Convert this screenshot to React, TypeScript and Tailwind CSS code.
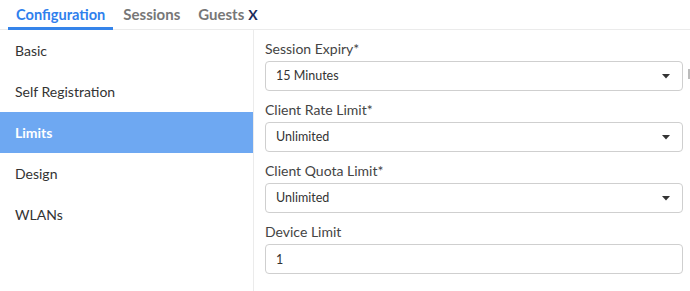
import { useState } from 'react';

const sections = ['Basic', 'Self Registration', 'Limits', 'Design', 'WLANs'];

function Caret() {
  return (
    <svg width="8" height="5" viewBox="0 0 8 5" className="text-[#333]" fill="currentColor">
      <path d="M0 0h8L4 4.5z" />
    </svg>
  );
}

function SelectBox({ value }: { value: string }) {
  return (
    <div className="h-[30px] w-[418px] flex items-center justify-between pl-[10px] pr-[12px] border border-[#cfcfcf] rounded-[4px] bg-white text-[12.5px] text-[#333]">
      <span>{value}</span>
      <Caret />
    </div>
  );
}

function Field({ label, children }: { label: string; children: React.ReactNode }) {
  return (
    <div className="flex flex-col gap-[2px] mb-[9px]">
      <label className="h-5 leading-5 text-[14px] text-[#444]">{label}</label>
      {children}
    </div>
  );
}

export default function App() {
  const [active, setActive] = useState('Limits');

  return (
    <div className="w-[690px] h-[291px] bg-white overflow-hidden font-['Lato',_'Liberation_Sans',_sans-serif]">
      {/* Tabs */}
      <div className="h-[30px] flex items-end border-b border-[#ebebeb] pl-2">
        <div className="relative px-2 h-full flex items-center text-[14.6px] font-bold text-[#2f80ed]">
          Configuration
          <span className="absolute left-0 right-0 -bottom-[1px] h-[3px] bg-[#3584ea]" />
        </div>
        <div className="px-[10px] h-full flex items-center text-[15px] font-bold text-[#777]">Sessions</div>
        <div className="px-2 h-full flex items-center text-[15px] font-bold text-[#777]">
          Guests <span className="ml-1 text-[14px] text-[#1c2c5b]">X</span>
        </div>
      </div>

      <div className="flex h-[261px]">
        {/* Sidebar */}
        <aside className="w-[255px] border-r border-[#ebebeb] flex flex-col">
          {sections.map((s) => (
            <button
              key={s}
              onClick={() => setActive(s)}
              className={`h-[41px] px-[15px] text-left text-[14px] ${
                active === s ? 'bg-[#6ea8f2] text-white font-bold' : 'text-[#333]'
              }`}
            >
              {s}
            </button>
          ))}
        </aside>

        {/* Form */}
        <div className="flex-1 pl-[11px] pt-[9px]">
          <div className="flex items-start">
            <div>
              <Field label="Session Expiry*">
                <SelectBox value="15 Minutes" />
              </Field>
            </div>
            <div className="ml-[5px] mt-[30px] w-[2px] h-[10px] bg-[#bbb]" />
          </div>
          <Field label="Client Rate Limit*">
            <SelectBox value="Unlimited" />
          </Field>
          <Field label="Client Quota Limit*">
            <SelectBox value="Unlimited" />
          </Field>
          <Field label="Device Limit">
            <input
              defaultValue="1"
              className="h-[30px] w-[418px] pl-[10px] border border-[#cfcfcf] rounded-[4px] text-[12.5px] text-[#333] outline-none"
            />
          </Field>
        </div>
      </div>
    </div>
  );
}
